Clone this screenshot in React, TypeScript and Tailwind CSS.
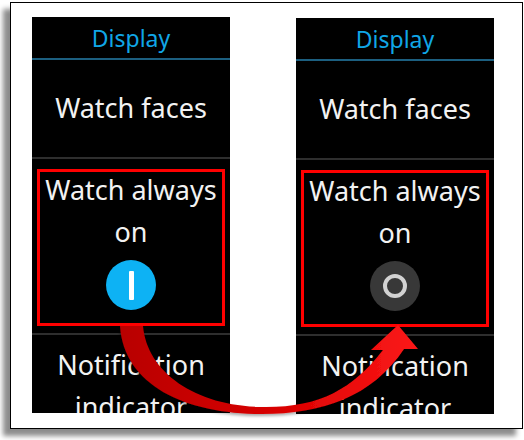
import React from "react";

const font = { fontFamily: '"Noto Sans", "Open Sans", sans-serif' };

function Toggle({ on }: { on: boolean }) {
  if (on) {
    return (
      <div className="w-[50px] h-[50px] rounded-full bg-[#0db2f4] flex items-center justify-center">
        <div className="w-[5px] h-[29px] bg-white rounded-[1px]" />
      </div>
    );
  }
  return (
    <div className="w-[50px] h-[50px] rounded-full bg-[#383838] flex items-center justify-center">
      <div className="w-[24px] h-[24px] rounded-full border-[4px] border-[#d2d2d2]" />
    </div>
  );
}

function WatchScreen({ on, offset }: { on: boolean; offset?: boolean }) {
  return (
    <div
      className={`w-[198px] h-[396px] bg-black overflow-hidden flex flex-col text-[#f2f2f2] ${offset ? "mt-px" : ""}`}
      style={font}
    >
      {/* Header */}
      <div className="h-[43px] shrink-0 flex items-center justify-center pt-[1px] border-b-2 border-[#1c5f80] text-[23px] text-[#10a6e6]">
        Display
      </div>

      {/* Watch faces */}
      <div className="h-[99px] shrink-0 flex items-center justify-center border-b-2 border-[#2e2e2e] text-[27px]">
        Watch faces
      </div>

      {/* Watch always on */}
      <div className="h-[176px] shrink-0 px-[5px] pt-[10px] pb-[7px] border-b-2 border-[#2e2e2e]">
        <div className="h-full border-[3px] border-[#ff0000] flex flex-col items-center">
          <div className="-mt-[3px] text-[27px] leading-[42px] text-center">
            Watch always
            <br />
            on
          </div>
          <div className="mt-[7px]">
            <Toggle on={on} />
          </div>
        </div>
      </div>

      {/* Notification indicator */}
      <div className="pt-[9px] text-[27px] leading-[42px] text-center">
        Notification
        <br />
        indicator
      </div>
    </div>
  );
}

function CurvedArrow() {
  return (
    <svg
      className="absolute left-0 top-0 pointer-events-none"
      width="524"
      height="440"
      viewBox="0 0 524 440"
    >
      <defs>
        <linearGradient id="arrowGrad" x1="120" y1="0" x2="430" y2="0" gradientUnits="userSpaceOnUse">
          <stop offset="0" stopColor="#b80000" />
          <stop offset="0.5" stopColor="#d80000" />
          <stop offset="1" stopColor="#ff1a1a" />
        </linearGradient>
        <filter id="arrowShadow" x="-10%" y="-10%" width="130%" height="130%">
          <feDropShadow dx="-1" dy="2" stdDeviation="1.5" floodColor="#000" floodOpacity="0.35" />
        </filter>
      </defs>
      <path
        filter="url(#arrowShadow)"
        fill="url(#arrowGrad)"
        d="M120 326 L143 326 C147 372 195 406 262 407 C318 408 352 390 383 350 L371 350 L398 325 L418 349 L404 349 C372 397 322 414 262 414 C185 414 124 385 120 326 Z"
      />
    </svg>
  );
}

export default function App() {
  return (
    <div className="relative w-[524px] h-[440px] bg-white overflow-hidden">
      <div className="ml-[10px] mt-[2px] w-[513px] h-[427px] border border-black bg-white shadow-[-7px_7px_5px_rgba(0,0,0,0.45)] flex items-start pl-[21px] pt-[14px] gap-[66px]">
        <WatchScreen on />
        <WatchScreen on={false} offset />
      </div>
      <CurvedArrow />
    </div>
  );
}
